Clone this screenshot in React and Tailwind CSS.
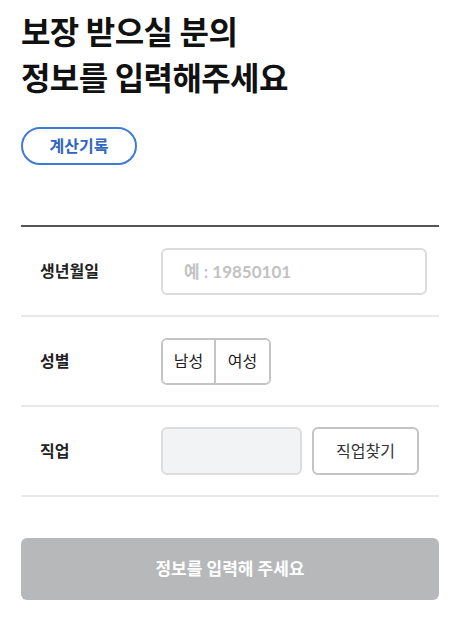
import { useState } from "react";

const font = { fontFamily: 'Lato, "Noto Sans CJK KR", sans-serif' };

const Row = ({ label, children }) => (
  <div className="flex items-center h-[90px] border-b-2 border-[#e9e9e9]">
    <div className="w-[140px] pl-[19px] text-[16px] font-bold text-[#222]">{label}</div>
    <div className="flex-1 flex items-center pr-[12px]">{children}</div>
  </div>
);

const App = () => {
  const [gender, setGender] = useState(null);

  return (
    <div className="min-h-screen bg-white pl-[21px] pr-[19px] pt-[9px]" style={font}>
      {/* Title */}
      <h1 className="text-[32px] leading-[46px] font-bold text-[#111] tracking-[-0.6px]">
        보장 받으실 분의
        <br />
        정보를 입력해주세요
      </h1>

      <button className="mt-[26px] w-[116px] h-[38px] rounded-full border-2 border-[#3d7bd6] text-[#2f66c0] text-[16px] font-bold">
        계산기록
      </button>

      {/* Form */}
      <div className="mt-[60px] border-t-2 border-[#555]">
        <Row label="생년월일">
          <input
            className="w-full h-[47px] rounded-[6px] border-2 border-[#dcdcdc] px-[21px] text-[17px] font-bold placeholder:text-[#c2c2c2] outline-none"
            placeholder="예 : 19850101"
          />
        </Row>
        <Row label="성별">
          <div className="flex h-[47px] rounded-[6px] border-2 border-[#c4c4c4] overflow-hidden">
            {["남성", "여성"].map((g, i) => (
              <button
                key={g}
                onClick={() => setGender(g)}
                className={`w-[53px] text-[16px] text-[#222] ${i === 0 ? "border-r-2 border-[#c4c4c4]" : ""} ${gender === g ? "bg-[#eef3fb]" : "bg-white"}`}
              >
                {g}
              </button>
            ))}
          </div>
        </Row>
        <Row label="직업">
          <div className="w-[141px] h-[48px] rounded-[6px] border-2 border-[#dddddd] bg-[#f2f3f5]" />
          <button className="ml-[10px] w-[107px] h-[48px] rounded-[6px] border-2 border-[#c4c4c4] text-[16px] text-[#333]">
            직업찾기
          </button>
        </Row>
      </div>

      <button className="mt-[41px] w-full h-[62px] rounded-[6px] bg-[#b7b8ba] text-white text-[17px] font-bold">
        정보를 입력해 주세요
      </button>
    </div>
  );
};

export default App;
